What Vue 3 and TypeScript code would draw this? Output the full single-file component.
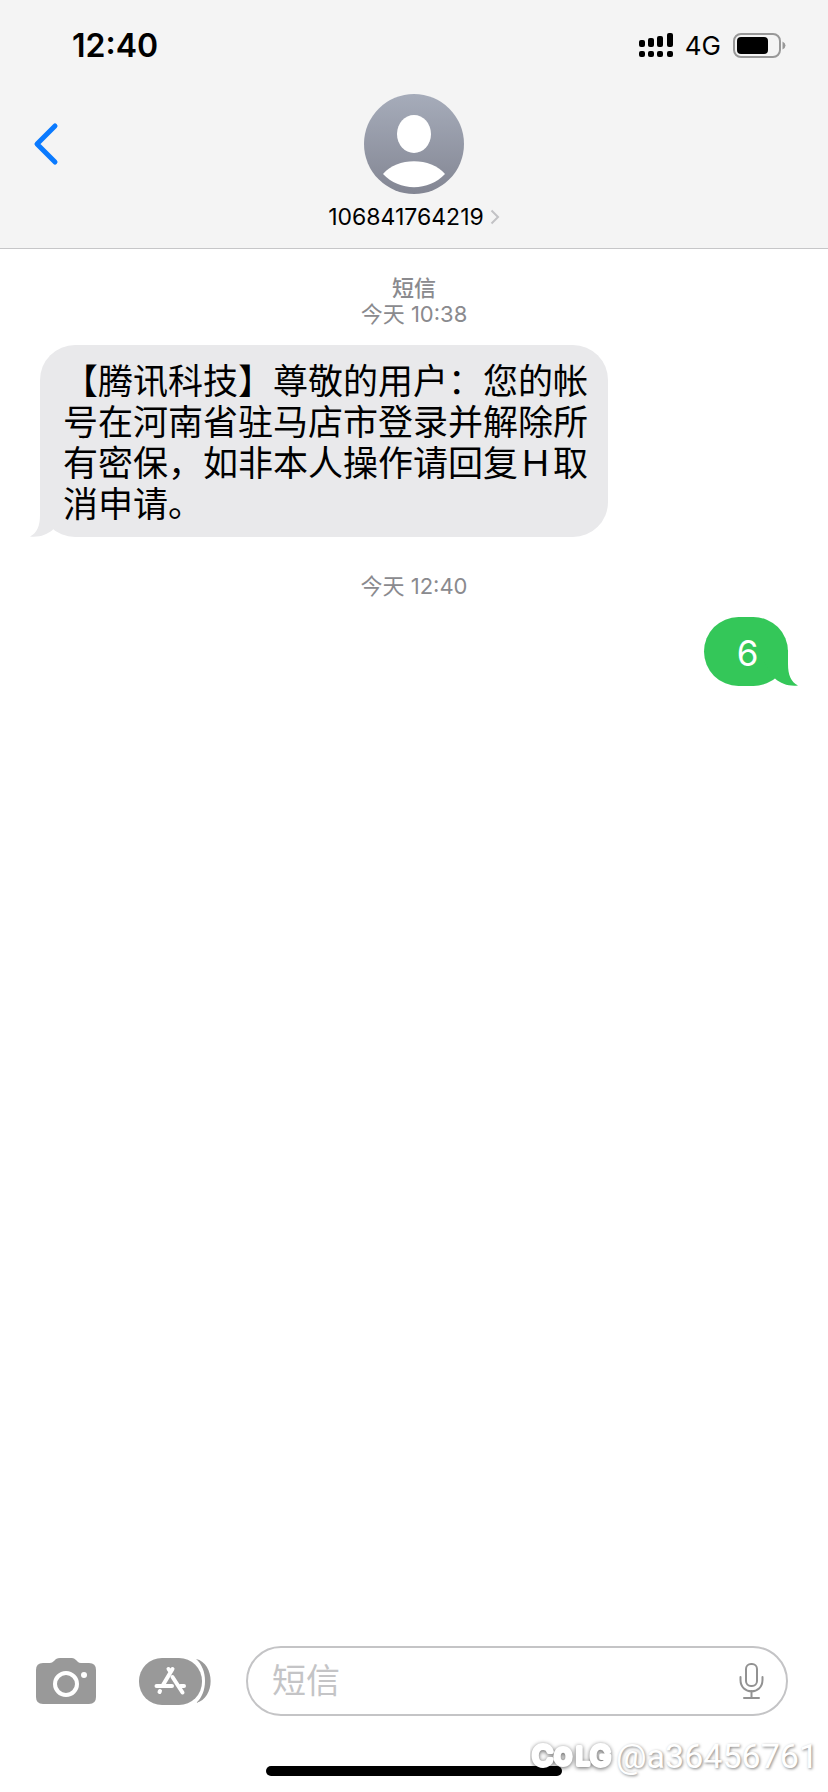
<script setup lang="ts">
import { ref } from 'vue'

interface Message {
  id: number
  labels: string[]
  text: string
  outgoing: boolean
}

const contact = '106841764219'
const draft = ref('')
const signal = [
  { x: 0, y: 7, h: 7 },
  { x: 9, y: 5, h: 9 },
  { x: 18, y: 3, h: 11 },
  { x: 28, y: 0, h: 14 },
]
const messages: Message[] = [
  {
    id: 1,
    labels: ['短信', '今天 10:38'],
    text: '【腾讯科技】尊敬的用户：您的帐号在河南省驻马店市登录并解除所有密保，如非本人操作请回复Ｈ取消申请。',
    outgoing: false,
  },
  { id: 2, labels: ['今天 12:40'], text: '6', outgoing: true },
]
</script>

<template>
  <div class="screen">
    <header class="top">
      <div class="status">
        <span class="clock">12:40</span>
        <div class="indicators">
          <svg class="signal" width="34" height="24" viewBox="0 0 34 24" aria-hidden="true">
            <g v-for="bar in signal" :key="bar.x">
              <rect :x="bar.x" :y="bar.y" width="6" :height="bar.h" rx="2" />
              <rect :x="bar.x" y="18" width="6" height="6" rx="2" />
            </g>
          </svg>
          <span class="network">4G</span>
          <svg width="53" height="25" viewBox="0 0 53 25" aria-hidden="true">
            <rect x="1" y="1" width="46" height="23" rx="7" fill="none" stroke="#989898" stroke-width="2" />
            <rect x="4" y="4" width="31" height="17" rx="4" />
            <path d="M49.500 8.500 Q52.500 10 52.500 12.500 T49.500 16.500Z" fill="#989898" />
          </svg>
        </div>
      </div>
      <div class="nav">
        <button class="back" type="button" aria-label="返回">
          <svg width="28" height="44" viewBox="0 0 28 44">
            <path d="M23 4 L5 22 L23 40" fill="none" stroke="#0a7aff" stroke-width="5" stroke-linecap="round" stroke-linejoin="round" />
          </svg>
        </button>
        <button class="contact" type="button">
          <svg width="100" height="100" viewBox="0 0 100 100" aria-hidden="true">
            <defs>
              <linearGradient id="avatar" x1="0" y1="0" x2="0" y2="1">
                <stop offset="0" stop-color="#a6acba" />
                <stop offset="1" stop-color="#838693" />
              </linearGradient>
            </defs>
            <circle cx="50" cy="50" r="50" fill="url(#avatar)" />
            <ellipse cx="50" cy="40" rx="17" ry="19" fill="#fff" />
            <path d="M19 80 C33 63 67 63 81 80 C65 97.500 35 97.500 19 80Z" fill="#fff" />
          </svg>
          <span class="name">
            <span>{{ contact }}</span>
            <svg width="10" height="16" viewBox="0 0 10 16" aria-hidden="true">
              <path d="M1.500 1.500 L8 8 L1.500 14.500" fill="none" stroke="#c2c2c5" stroke-width="2" />
            </svg>
          </span>
        </button>
      </div>
    </header>

    <main class="thread">
      <section v-for="m in messages" :key="m.id" class="entry">
        <div class="labels">
          <div v-for="label in m.labels" :key="label">{{ label }}</div>
        </div>
        <div class="bubble" :class="{ outgoing: m.outgoing }">
          {{ m.text }}
          <svg class="tail" width="34" height="36" viewBox="0 0 34 36" aria-hidden="true">
            <path d="M10 0 V14 C10 25 7 32 0 35.500 C9 36.500 17 34 23 28.500 L34 12 V0Z" />
          </svg>
        </div>
      </section>
    </main>

    <footer class="composer">
      <button type="button" aria-label="相机">
        <svg width="62" height="48" viewBox="0 0 62 48">
          <path d="M8 6 H15 Q17 6 19 4 L21 2 Q23 1 25 1 H37 Q39 1 41 3 L43 5 Q44 6 46 6 H54 Q61 6 61 13 V40 Q61 47 54 47 H8 Q1 47 1 40 V13 Q1 6 8 6Z" fill="#999" />
          <circle cx="31" cy="27" r="11" fill="none" stroke="#fff" stroke-width="4" />
          <circle cx="49" cy="18" r="3" fill="#fff" />
        </svg>
      </button>
      <button class="apps" type="button" aria-label="应用">
        <svg width="74" height="48" viewBox="0 0 74 48">
          <rect x="1" y="1" width="63" height="47" rx="23" fill="#999" />
          <path d="M58 2 C77 6 78 41 58 46 C70 36 70 12 58 2Z" fill="#999" />
          <g fill="none" stroke="#fff" stroke-width="4" stroke-linecap="round">
            <path d="M30.500 12 L32.500 15 M34.500 12 L25 28" />
            <path d="M18.500 29 H34 M42.500 29 H46" />
            <path d="M34.500 20 L44.500 35.500" />
            <path d="M22 34 L21.500 35" />
          </g>
        </svg>
      </button>
      <div class="field">
        <input v-model="draft" type="text" placeholder="短信" aria-label="短信" />
        <button type="button" aria-label="语音输入">
          <svg width="26" height="38" viewBox="0 0 26 38">
            <g fill="none" stroke="#929292" stroke-width="2" stroke-linecap="round">
              <rect x="7" y="2" width="11" height="22" rx="5" />
              <path d="M1.500 15 V18 C1.500 33 23.500 33 23.500 18 V15 M12.500 29 V36 M5 36 H20" />
            </g>
          </svg>
        </button>
      </div>
    </footer>
    <div class="home"></div>

    <div class="credit">
      <svg width="86" height="40" viewBox="0 0 86 40" role="img" aria-label="COLG">
        <g class="brand">
          <text x="2" y="30" font-size="29">C</text>
          <text x="24" y="29" font-size="30">o</text>
          <text x="46" y="29" font-size="24">L</text>
          <text x="60" y="30" font-size="28">G</text>
        </g>
      </svg>
      <span>@a36456761</span>
    </div>
  </div>
</template>

<style>
body {
  margin: 0;
  background: #fff;
}
</style>

<style scoped>
.screen {
  position: relative;
  display: flex;
  flex-direction: column;
  min-height: 100vh;
  box-sizing: border-box;
  padding-bottom: 16px;
  background: #fff;
  color: #000;
  font-family: Inter, "Noto Sans CJK SC", sans-serif;
}
button {
  display: flex;
  padding: 0;
  border: 0;
  background: none;
  color: inherit;
  font: inherit;
}
.top {
  background: #f4f4f4;
  border-bottom: 1px solid #c6c6c8;
}
.status {
  display: flex;
  justify-content: space-between;
  align-items: center;
  height: 90px;
  padding: 0 42px 0 72px;
}
.clock {
  font-size: 32px;
  font-weight: 600;
}
.indicators {
  display: flex;
  align-items: center;
  gap: 12px;
}
.network {
  font-size: 26px;
}
.nav {
  display: grid;
  grid-template-columns: 1fr auto 1fr;
  padding: 4px 32px 16px;
}
.back {
  align-self: start;
  justify-self: start;
  margin-top: 28px;
}
.contact {
  flex-direction: column;
  align-items: center;
  gap: 8px;
}
.name {
  display: flex;
  align-items: center;
  gap: 6px;
  font-size: 23px;
  line-height: 30px;
}
.thread {
  flex: 1;
  padding: 26px 40px;
}
.entry {
  display: flex;
  flex-direction: column;
  align-items: flex-start;
  gap: 18px;
  margin-bottom: 36px;
}
.labels {
  align-self: stretch;
  color: #8a8a8e;
  font-size: 22px;
  line-height: 26px;
  text-align: center;
}
.labels div:first-child:not(:last-child) {
  font-weight: 500;
}
.bubble {
  position: relative;
  box-sizing: border-box;
  max-width: 568px;
  padding: 16px 20px 12px 23px;
  border-radius: 35px;
  background: #e9e9eb;
  font-size: 35px;
  line-height: 41px;
}
.tail {
  position: absolute;
  left: -10px;
  bottom: 0;
  fill: #e9e9eb;
}
.outgoing {
  align-self: flex-end;
  min-width: 84px;
  background: #34c759;
  color: #fff;
  text-align: center;
}
.outgoing .tail {
  left: auto;
  right: -10px;
  fill: #34c759;
  transform: scaleX(-1);
}
.composer {
  display: flex;
  align-items: center;
  padding: 0 40px 50px 35px;
}
.apps {
  margin: 0 34px 0 41px;
}
.field {
  display: flex;
  flex: 1;
  min-width: 0;
  align-items: center;
  box-sizing: border-box;
  height: 70px;
  padding: 0 21px 0 24px;
  border: 2px solid #c4c4c6;
  border-radius: 35px;
}
.field input {
  flex: 1;
  min-width: 0;
  padding: 0;
  border: 0;
  outline: 0;
  background: none;
  font: 34px/48px Inter, "Noto Sans CJK SC", sans-serif;
}
.field input::placeholder {
  color: #c4c4c6;
  opacity: 1;
}
.home {
  align-self: center;
  width: 296px;
  height: 10px;
  border-radius: 5px;
  background: #000;
}
.credit {
  position: absolute;
  right: 10px;
  bottom: 16px;
  display: flex;
  align-items: center;
  color: #fff;
  font-family: Roboto, sans-serif;
  font-size: 34px;
  line-height: 40px;
  text-shadow: 1px 1px 3px rgba(0, 0, 0, 0.5);
}
.brand {
  fill: #fff;
  stroke: #fff;
  stroke-width: 4px;
  stroke-linejoin: round;
  font-family: Inter, sans-serif;
  font-weight: 500;
  text-shadow: none;
  filter: drop-shadow(0 1px 2px rgba(0, 0, 0, 0.6));
}
</style>
